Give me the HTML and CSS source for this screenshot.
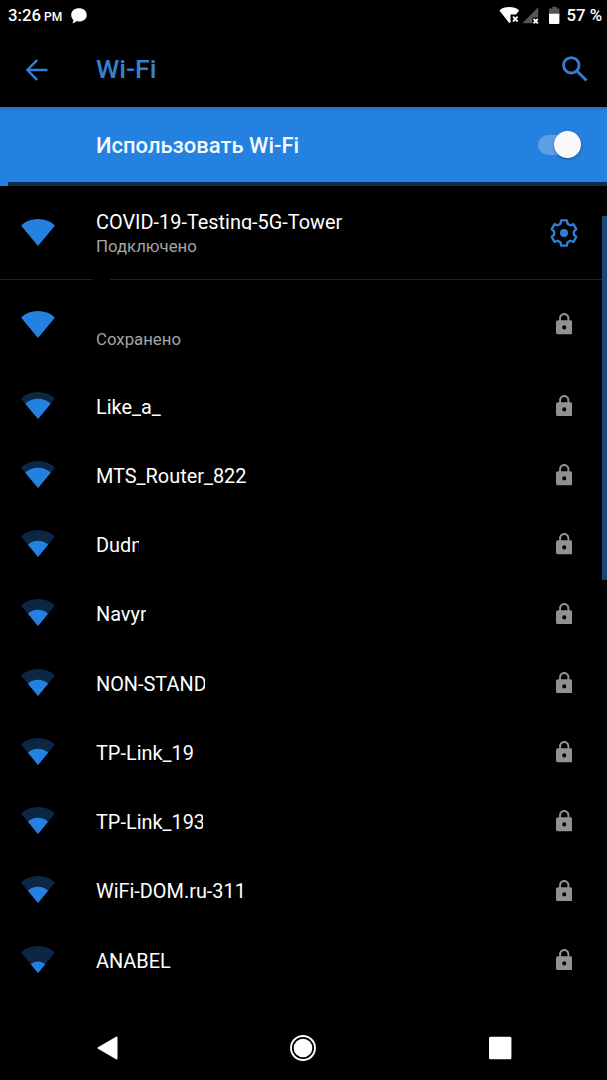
FILE: index.html
```html
<!DOCTYPE html>
<html lang="ru">
<head>
<meta charset="utf-8">
<title>Wi-Fi</title>
<link rel="stylesheet" href="styles.css">
</head>
<body>
<svg class="defs" width="0" height="0">
  <defs>
    <path id="fan" d="M17 27 L.6 7.2 Q0 6.4 .9 5.8 C5 2.2 10.500 0 17 0 S29 2.200 33.100 5.800 Q34 6.400 33.400 7.200Z"/>
    <symbol id="lock" viewBox="4 1 16 21"><path fill-rule="evenodd" d="M18 8h-1V6c0-2.760-2.240-5-5-5S7 3.240 7 6v2H6c-1.100 0-2 .9-2 2v10c0 1.100.9 2 2 2h12c1.100 0 2-.9 2-2V10c0-1.100-.9-2-2-2zM8.900 6c0-1.710 1.390-3.100 3.100-3.100s3.100 1.390 3.100 3.100v2H8.900zM12 13a2 2 0 1 1 0 4a2 2 0 1 1 0-4z"/></symbol>
    <symbol id="wifi4" viewBox="0 0 34 27"><use href="#fan"/></symbol>
    <symbol id="wifi3" viewBox="0 0 34 27"><use href="#fan" opacity=".3"/><use href="#fan" transform="translate(4.250 6.750) scale(.75)"/></symbol>
    <symbol id="wifi2" viewBox="0 0 34 27"><use href="#fan" opacity=".3"/><use href="#fan" transform="translate(6.800 10.800) scale(.6)"/></symbol>
    <symbol id="wifi1" viewBox="0 0 34 27"><use href="#fan" opacity=".3"/><use href="#fan" transform="translate(9.700 15.400) scale(.43)"/></symbol>
  </defs>
</svg>
<div class="screen">
  <div class="status">
    <span class="time">3:26</span><span class="pm">PM</span>
    <svg class="bubble" width="16" height="16" viewBox="0 0 16 16"><path d="M8 .3C12.400.3 15.700 3 15.700 6.900S12.400 13.400 8 13.400c-.8 0-1.500-.1-2.200-.3C4.500 14.300 3.100 15.100 1.200 15.300c.8-.9 1.200-2 1.300-3.400C1 10.700.2 9 .2 6.900.2 3 3.600.3 8 .3z"/></svg>
    <svg class="signals" width="62" height="20" viewBox="0 0 62 20">
      <path class="on" d="M.4 5.400C3 3 6.200 2 10.200 2s7.400 1 10 3.400L17 9.500H11.500V17.400L10.200 18Z"/>
      <path class="mark" d="M14 11.700l4.600 4.800M18.600 11.700L14 16.500"/>
      <path class="dim" d="M39.300 2V12.500H33.500V18.200H23.500Z"/>
      <path class="mark" d="M34.600 13.800l4.200 4.600M38.800 13.800l-4.200 4.600"/>
      <path class="dim" d="M53.200 1.700h4.600v1.900h2.600v5.600h-10.400V3.600h3.200z"/>
      <path class="on" d="M50 8.800h10.400v9.100q0 1-1 1h-8.400q-1 0-1-1z"/>
    </svg>
    <span class="percent">57 %</span>
  </div>
  <div class="appbar">
    <svg class="arrow" width="22" height="22" viewBox="0 0 22 22"><path d="M21.500 11H2M11.200 1L1.400 11l9.800 10"/></svg>
    <h1 class="title">Wi-Fi</h1>
    <svg class="search" width="26" height="26" viewBox="0 0 26 26"><circle cx="9.300" cy="9.300" r="7.700"/><path d="M14.900 14.900L24.500 24.500"/></svg>
  </div>
  <div class="banner"><span class="banner-text">Использовать Wi-Fi</span><div class="toggle"><i class="thumb"></i></div></div>
  <div class="progress"><i class="bar"></i></div>
  <div class="row connected">
    <svg class="wifi"><use href="#wifi4"/></svg>
    <div class="label"><div class="name crop">COVID-19-Testing-5G-Tower</div><div class="sub">Подключено</div></div>
    <svg class="gear" width="28" height="28" viewBox="0 0 28 28"><path d="M11.100 1.400H16.900L17.600 4.700L20.250 6.230L23.460 5.190L26.360 10.210L23.850 12.470V15.530L26.360 17.790L23.460 22.810L20.250 21.770L17.600 23.300L16.900 26.600H11.100L10.400 23.300L7.750 21.770L4.540 22.810L1.640 17.790L4.150 15.530V12.470L1.640 10.210L4.540 5.190L7.750 6.230L10.400 4.700Z"/><circle cx="14" cy="14" r="4"/></svg>
  </div>
  <div class="divider"><i class="gap"></i></div>
  <div class="row saved">
    <svg class="wifi"><use href="#wifi4"/></svg>
    <div class="label"><div class="name"></div><div class="sub">Сохранено</div></div>
    <svg class="lock"><use href="#lock"/></svg>
  </div>
  <div class="networks">
    <div class="row"><svg class="wifi"><use href="#wifi3"/></svg><div class="label"><div class="name">Like_a_</div></div><svg class="lock"><use href="#lock"/></svg></div>
    <div class="row"><svg class="wifi"><use href="#wifi3"/></svg><div class="label"><div class="name">MTS_Router_822</div></div><svg class="lock"><use href="#lock"/></svg></div>
    <div class="row"><svg class="wifi"><use href="#wifi2"/></svg><div class="label"><div class="name cut-dudn">Dudn</div></div><svg class="lock"><use href="#lock"/></svg></div>
    <div class="row"><svg class="wifi"><use href="#wifi2"/></svg><div class="label"><div class="name cut-navy">Navyr</div></div><svg class="lock"><use href="#lock"/></svg></div>
    <div class="row"><svg class="wifi"><use href="#wifi2"/></svg><div class="label"><div class="name cut-stand">NON-STAND</div></div><svg class="lock"><use href="#lock"/></svg></div>
    <div class="row"><svg class="wifi"><use href="#wifi2"/></svg><div class="label"><div class="name">TP-Link_19</div></div><svg class="lock"><use href="#lock"/></svg></div>
    <div class="row"><svg class="wifi"><use href="#wifi2"/></svg><div class="label"><div class="name cut-link">TP-Link_193</div></div><svg class="lock"><use href="#lock"/></svg></div>
    <div class="row"><svg class="wifi"><use href="#wifi2"/></svg><div class="label"><div class="name">WiFi-DOM.ru-311</div></div><svg class="lock"><use href="#lock"/></svg></div>
    <div class="row"><svg class="wifi"><use href="#wifi1"/></svg><div class="label"><div class="name">ANABEL</div></div><svg class="lock"><use href="#lock"/></svg></div>
  </div>
  <div class="navbar">
    <svg width="24" height="28" viewBox="0 0 24 28"><path d="M20.500 3.500V24.500L2.500 14Z" stroke="#fff" stroke-width="2" stroke-linejoin="round"/></svg>
    <svg width="28" height="28" viewBox="0 0 28 28"><circle cx="13" cy="14" r="12" fill="none" stroke="#fff" stroke-width="1.900"/><circle cx="13" cy="14" r="9.300"/></svg>
    <svg width="24" height="28" viewBox="0 0 24 28"><rect x="1" y="2.800" width="22.400" height="22.400" rx="1.500"/></svg>
  </div>
  <div class="scrollbar"></div>
</div>
</body>
</html>
```

FILE: styles.css
```css
* { box-sizing: border-box; }
body { margin: 0; background: #000; font-family: Roboto, "Noto Sans", sans-serif; color: #fff; }
svg { display: block; flex: none; fill: #fff; }
.defs { position: absolute; }
.screen { position: relative; width: 607px; height: 1080px; overflow: hidden; display: flex; flex-direction: column; }
.status { height: 32px; display: flex; align-items: baseline; padding: 0 5px 0 8px; line-height: 31px; font-weight: 500; }
.time { font-size: 16.800px; }
.pm { font-size: 12px; margin-left: 3px; width: 26.500px; }
.bubble { align-self: flex-start; margin-top: 7.500px; }
.signals { align-self: flex-start; margin: 5px 0 0 auto; }
.percent { font-size: 16.800px; margin-left: 5px; white-space: nowrap; }
.on { fill: #fff; }
.dim { fill: #555; }
.mark { fill: none; stroke: #fff; stroke-width: 1.900; }
.appbar { height: 75px; display: flex; align-items: center; padding: 0 19.500px 0 26px; }
.arrow { fill: none; stroke: #3580d2; stroke-width: 2.500; }
.title { margin: 0 auto 1px 48px; font-size: 26.500px; line-height: 32px; font-weight: 500; color: #3580d2; }
.search { fill: none; stroke: #3580d2; stroke-width: 2.800; margin-top: -2px; }
.banner { height: 75px; display: flex; align-items: center; padding: 0 27px 0 96px; background: linear-gradient(#286bb9, #2481e0 4px); font-size: 22px; font-weight: 500; }
.banner-text { flex: 1; padding-top: 2px; color: #f2faff; }
.toggle { width: 42px; height: 20px; border-radius: 10px; background: linear-gradient(90deg, #5d9fe7 34px, transparent 34px); display: flex; align-items: center; justify-content: flex-end; }
.thumb { width: 27px; height: 27px; flex: none; border-radius: 50%; background: #fafafa; box-shadow: 0 1px 3px rgba(0,0,0,.35); margin-right: -1px; }
.progress { height: 4px; background: #0e2c4c; }
.bar { display: block; width: 8px; height: 4px; background: #2481e0; }
.row { height: 69.250px; display: flex; align-items: center; padding: 0 35px 0 21px; }
.connected { height: 93px; padding-right: 29px; }
.saved { height: 90.500px; padding-bottom: 1px; }
.wifi { width: 34px; height: 27px; fill: #2481e0; }
.label { flex: 1; margin-left: 41px; }
.name { font-size: 19.900px; line-height: 24px; white-space: nowrap; overflow: hidden; }
.networks .name { padding-top: 5px; }
.crop { height: 21px; line-height: 27px; }
.connected .sub { margin-top: 6px; }
.sub { font-size: 16.800px; line-height: 20px; color: #a4a4a4; }
.saved .name { height: 28px; }
.gear { fill: none; stroke: #2f80d6; stroke-width: 2.300; stroke-linejoin: round; }
.gear circle { fill: #2f80d6; stroke: none; }
.lock { width: 16.500px; height: 21.600px; fill: #919191; }
.saved .lock { margin-top: -1px; }
.networks .lock { margin-top: 1px; }
.divider { height: 1px; background: #222; }
.gap { display: block; width: 17px; height: 1px; margin-left: 93px; background: #000; }
.cut-dudn { width: 43px; }
.cut-navy { width: 50px; }
.cut-stand { width: 109px; }
.cut-link { width: 107px; }
.navbar { margin-top: auto; height: 64px; display: flex; justify-content: space-between; align-items: center; padding: 0 95px 0 96px; }
.scrollbar { position: absolute; right: 0; top: 216px; width: 5px; height: 364px; background: #194673; }
```
